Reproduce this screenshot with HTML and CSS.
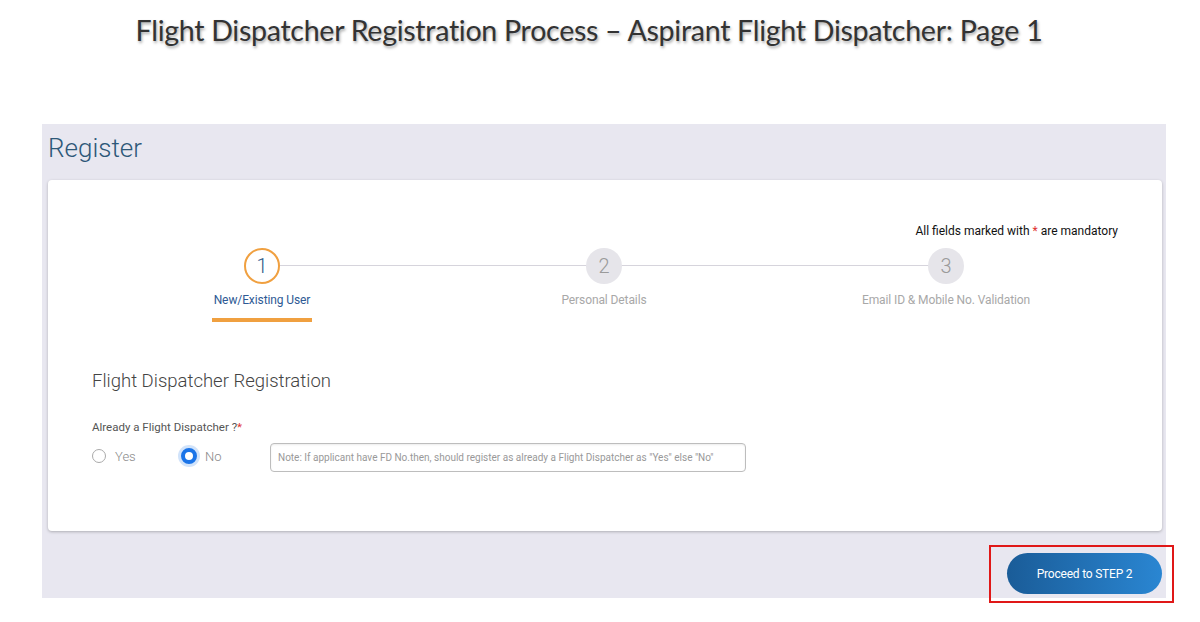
FILE: index.html
```html
<!DOCTYPE html>
<html>
<head>
<meta charset="utf-8">
<link rel="stylesheet" href="styles.css">
</head>
<body>
<h1 class="slide-title">Flight Dispatcher Registration Process – Aspirant Flight Dispatcher: Page 1</h1>
<div class="panel">
  <h2 class="panel-title">Register</h2>
  <div class="card">
    <div class="mandatory">All fields marked with <span class="req">*</span> are mandatory</div>
    <div class="stepper">
      <div class="step-line"></div>
      <div class="step active">
        <div class="step-circle">1</div>
        <div class="step-label">New/Existing User</div>
        <div class="step-bar"></div>
      </div>
      <div class="step">
        <div class="step-circle">2</div>
        <div class="step-label">Personal Details</div>
      </div>
      <div class="step">
        <div class="step-circle">3</div>
        <div class="step-label">Email ID &amp; Mobile No. Validation</div>
      </div>
    </div>
    <div class="form">
      <h3 class="form-title">Flight Dispatcher Registration</h3>
      <div class="field-label">Already a Flight Dispatcher ?<span class="req">*</span></div>
      <div class="field-row">
        <label class="radio"><span class="radio-dot"></span>Yes</label>
        <label class="radio checked"><span class="radio-dot"></span>No</label>
        <div class="note">Note: If applicant have FD No.then, should register as already a Flight Dispatcher as "Yes" else "No"</div>
      </div>
    </div>
  </div>
  <div class="actions">
    <button class="btn-primary">Proceed to STEP 2</button>
    <div class="highlight"></div>
  </div>
</div>
</body>
</html>
```
FILE: styles.css
```css
html, body {
  margin: 0;
  padding: 0;
  background: #ffffff;
  font-family: Roboto, "Liberation Sans", Arial, sans-serif;
}
body {
  min-height: 622px;
}
.slide-title {
  margin: 0;
  height: 124px;
  box-sizing: border-box;
  padding: 13px 22px 0 0;
  font-family: Lato, "Open Sans", sans-serif;
  font-weight: 400;
  font-size: 28.6px;
  color: #333333;
  text-align: center;
  letter-spacing: -0.3px;
  text-shadow: 1px 2px 3px rgba(0,0,0,0.35);
}
.panel {
  margin-left: 42px;
  width: 1124px;
  height: 474px;
  background: #e8e7f0;
  box-sizing: border-box;
  padding: 0 4px 0 6px;
  position: relative;
}
.panel-title {
  margin: 0;
  height: 56px;
  box-sizing: border-box;
  padding-top: 8px;
  font-weight: 300;
  font-size: 26px;
  color: #2d5878;
  line-height: 32px;
}
.card {
  background: #ffffff;
  border-radius: 4px;
  box-shadow: 0 1px 3px rgba(0,0,0,0.25);
  height: 351px;
  box-sizing: border-box;
  padding-top: 44px;
  position: relative;
}
.mandatory {
  text-align: right;
  padding-right: 44px;
  font-size: 12px;
  color: #111;
  line-height: 14px;
}
.req { color: #e03030; }
.stepper {
  position: relative;
  display: flex;
  margin-left: 43px;
  width: 1028px;
  margin-top: 10px;
}
.step-line {
  position: absolute;
  left: 172px;
  right: 172px;
  top: 17px;
  height: 1px;
  background: #d6d4dc;
}
.step {
  flex: 0 0 342px;
  display: flex;
  flex-direction: column;
  align-items: center;
  position: relative;
}
.step-circle {
  width: 36px;
  height: 36px;
  border-radius: 50%;
  background: #e6e5ea;
  color: #9a9a9a;
  font-size: 20px;
  font-weight: 300;
  display: flex;
  align-items: center;
  justify-content: center;
  box-sizing: border-box;
}
.step.active .step-circle {
  background: #ffffff;
  border: 2px solid #f0a040;
  color: #2e5a88;
}
.step-label {
  margin-top: 9px;
  font-size: 12px;
  color: #a8a8a8;
  line-height: 14px;
  letter-spacing: -0.1px;
}
.step.active .step-label {
  color: #2e5a94;
}
.step-bar {
  margin-top: 11px;
  width: 100px;
  height: 4px;
  background: #f0a040;
}
.form {
  padding-left: 44px;
  margin-top: 48px;
}
.form-title {
  margin: 0;
  font-size: 18.5px;
  font-weight: 300;
  color: #444;
  line-height: 22px;
}
.field-label {
  margin-top: 28px;
  font-size: 11.5px;
  color: #555;
  line-height: 14px;
}
.field-row {
  display: flex;
  align-items: center;
  margin-top: 9px;
}
.radio {
  display: flex;
  align-items: center;
  font-size: 13px;
  color: #888;
  font-weight: 300;
  width: 90px;
  margin-top: -3px;
}
.radio-dot {
  width: 14px;
  height: 14px;
  border-radius: 50%;
  border: 1px solid #aaa;
  box-sizing: border-box;
  margin-right: 9px;
  background: #fff;
}
.radio.checked .radio-dot {
  border: 4px solid #1a74e8;
  width: 16px;
  height: 16px;
  margin-left: -1px;
  margin-right: 8px;
  box-shadow: 0 0 0 3px rgba(26,116,232,0.2);
}
.radio.checked { width: 88px; }
.note {
  width: 476px;
  height: 29px;
  box-sizing: border-box;
  border: 1px solid #bdbdbd;
  border-radius: 4px;
  font-size: 10px;
  color: #999;
  padding-left: 7px;
  display: flex;
  align-items: center;
  box-shadow: inset 0 1px 2px rgba(0,0,0,0.08);
}
.actions {
  display: flex;
  justify-content: flex-end;
  padding-top: 22px;
  position: relative;
}
.btn-primary {
  width: 155px;
  height: 41px;
  border: none;
  border-radius: 21px;
  background: linear-gradient(90deg, #1a5c98 0%, #2a86d2 100%);
  color: #ffffff;
  font-family: Roboto, "Liberation Sans", sans-serif;
  font-size: 12px;
  letter-spacing: -0.2px;
}
.highlight {
  position: absolute;
  right: -12px;
  top: 14px;
  width: 185px;
  height: 58px;
  border: 2px solid #e01818;
  box-sizing: border-box;
}
```
